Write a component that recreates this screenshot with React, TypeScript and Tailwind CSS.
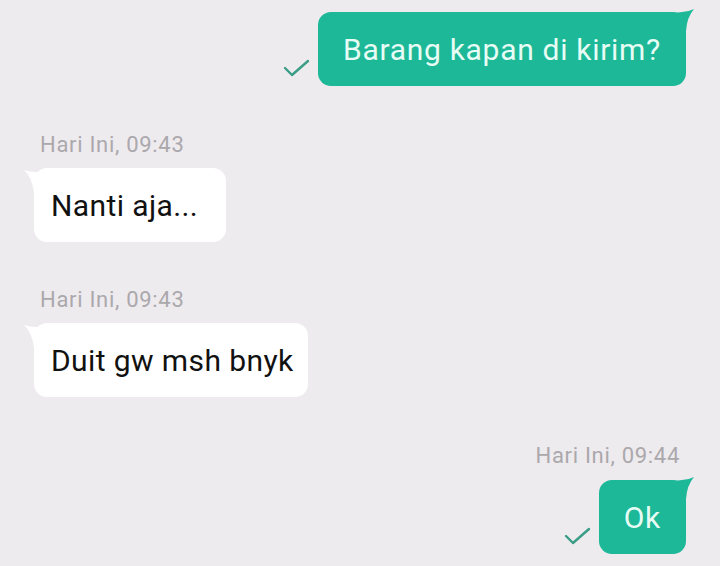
const font = { fontFamily: "Roboto, 'Noto Sans', sans-serif" };

function Check() {
  return (
    <svg width="27" height="20" viewBox="0 0 27 20" className="mb-[8px] shrink-0">
      <polyline points="2,10 9,17 25,3" fill="none" stroke="#3a9d86" strokeWidth="2.4" strokeLinecap="round" strokeLinejoin="round" />
    </svg>
  );
}

function Outgoing({ text }: { text: string }) {
  return (
    <div className="flex items-end justify-end gap-[8px]">
      <Check />
      <div className="relative h-[74px] flex items-center rounded-[13px] bg-[#1cb898] px-[25px] text-[30px] tracking-[0.7px] text-[#e6fcf4]">
        {text}
        <svg width="22" height="22" viewBox="0 0 22 22" className="absolute -right-[10px] -top-[3px]">
          <path d="M0 4 L8 3 Q14 3 20 0 Q13 8 12 22 L0 22 Z" fill="#1cb898" />
        </svg>
      </div>
    </div>
  );
}

function Incoming({ text, wide }: { text: string; wide?: boolean }) {
  return (
    <div className="flex">
      <div className={`relative h-[74px] flex items-center rounded-[13px] bg-white pl-[17px] text-[30px] tracking-[0.4px] text-[#111] ${wide ? "pr-[28px]" : "pr-[14px]"}`}>
        {text}
        <svg width="22" height="24" viewBox="0 0 22 24" className="absolute -left-[10px] top-[1px]">
          <path d="M22 3 L12 3 Q6 3 0 1 Q8 8 10 24 L22 24 Z" fill="#ffffff" />
        </svg>
      </div>
    </div>
  );
}

function Stamp({ text, right }: { text: string; right?: boolean }) {
  return (
    <div className={`h-[24px] leading-[24px] text-[22px] tracking-[0.7px] text-[#aba8ac] ${right ? "text-right pr-[6px]" : "pl-[6px]"}`}>
      {text}
    </div>
  );
}

export default function App() {
  return (
    <div className="w-[720px] h-[566px] overflow-hidden bg-[#eeebef] px-[34px] pt-[12px]" style={font}>
      <Outgoing text="Barang kapan di kirim?" />
      <div className="mt-[47px] mb-[11px]">
        <Stamp text="Hari Ini, 09:43" />
      </div>
      <Incoming text="Nanti aja..." wide />
      <div className="mt-[46px] mb-[11px]">
        <Stamp text="Hari Ini, 09:43" />
      </div>
      <Incoming text="Duit gw msh bnyk" />
      <div className="mt-[47px] mb-[12px]">
        <Stamp text="Hari Ini, 09:44" right />
      </div>
      <Outgoing text="Ok" />
    </div>
  );
}
